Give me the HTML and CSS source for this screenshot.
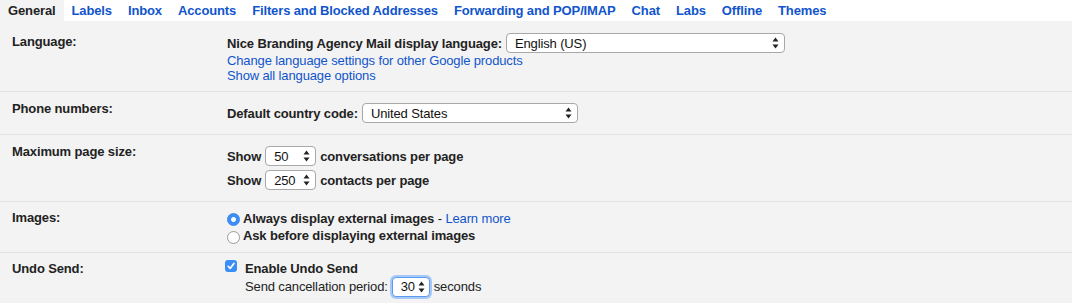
FILE: index.html
```html
<!DOCTYPE html>
<html>
<head>
<meta charset="utf-8">
<link rel="stylesheet" href="styles.css">
</head>
<body>
<div class="tabs">
  <span class="tab active">General</span>
  <a class="tab">Labels</a>
  <a class="tab">Inbox</a>
  <a class="tab">Accounts</a>
  <a class="tab">Filters and Blocked Addresses</a>
  <a class="tab">Forwarding and POP/IMAP</a>
  <a class="tab">Chat</a>
  <a class="tab">Labs</a>
  <a class="tab">Offline</a>
  <a class="tab">Themes</a>
</div>
<div class="settings">
  <div class="row row-lang">
    <div class="label">Language:</div>
    <div class="value">
      <div class="line ctl"><b>Nice Branding Agency Mail display language:</b><span class="select w-lang">English (US)<svg class="arrows" width="7" height="12" viewBox="0 0 7 12"><path d="M3.5 0.5 6.5 4.5H0.5Z M3.5 11.5 6.5 7.5H0.5Z"/></svg></span></div>
      <div class="line"><a class="link">Change language settings for other Google products</a></div>
      <div class="line"><a class="link">Show all language options</a></div>
    </div>
  </div>
  <div class="row row-phone">
    <div class="label">Phone numbers:</div>
    <div class="value">
      <div class="line ctl"><b>Default country code:</b><span class="select w-country">United States<svg class="arrows" width="7" height="12" viewBox="0 0 7 12"><path d="M3.5 0.5 6.5 4.5H0.5Z M3.5 11.5 6.5 7.5H0.5Z"/></svg></span></div>
    </div>
  </div>
  <div class="row row-size">
    <div class="label">Maximum page size:</div>
    <div class="value">
      <div class="line ctl"><b>Show</b><span class="select w-num">50<svg class="arrows" width="7" height="12" viewBox="0 0 7 12"><path d="M3.5 0.5 6.5 4.5H0.5Z M3.5 11.5 6.5 7.5H0.5Z"/></svg></span><b>conversations per page</b></div>
      <div class="line ctl"><b>Show</b><span class="select w-num">250<svg class="arrows" width="7" height="12" viewBox="0 0 7 12"><path d="M3.5 0.5 6.5 4.5H0.5Z M3.5 11.5 6.5 7.5H0.5Z"/></svg></span><b>contacts per page</b></div>
    </div>
  </div>
  <div class="row row-img">
    <div class="label">Images:</div>
    <div class="value">
      <div class="line opt"><span class="radio on"></span><b>Always display external images</b>&nbsp;-&nbsp;<a class="link">Learn more</a></div>
      <div class="line opt"><span class="radio off"></span><b>Ask before displaying external images</b></div>
    </div>
  </div>
  <div class="row row-undo">
    <div class="label">Undo Send:</div>
    <div class="value">
      <div class="line chk"><span class="checkbox"><svg width="12" height="12" viewBox="0 0 12 12"><path d="M3.2 6.3 5.1 8.4 8.9 3.4" fill="none" stroke="#fff" stroke-width="1.7" stroke-linecap="round" stroke-linejoin="round"/></svg></span><b>Enable Undo Send</b></div>
      <div class="line ctl indent">Send cancellation period:<span class="select w-undo focus">30<svg class="arrows" width="7" height="12" viewBox="0 0 7 12"><path d="M3.5 0.5 6.5 4.5H0.5Z M3.5 11.5 6.5 7.5H0.5Z"/></svg></span>seconds</div>
    </div>
  </div>
</div>
</body>
</html>
```
FILE: styles.css
```css
html, body {
  margin: 0;
  padding: 0;
}
body {
  font-family: "Liberation Sans", Arial, sans-serif;
  font-size: 13px;
  letter-spacing: -0.13px;
  color: #222;
  background: #f3f3f3;
  height: 303px;
  overflow: hidden;
}
.tabs {
  display: flex;
  background: #fff;
  height: 21px;
  line-height: 21px;
  font-weight: bold;
}
.tab {
  padding: 0 8px;
  color: #15c;
  white-space: nowrap;
}
.tab.active {
  background: #f3f3f3;
  color: #222;
}
.row {
  display: grid;
  grid-template-columns: 215px 1fr;
  padding-left: 12px;
  border-bottom: 1px solid #e1e1e1;
}
.label {
  font-weight: bold;
  line-height: 15px;
}
.value {
  display: flex;
  flex-direction: column;
}
.line {
  display: flex;
  align-items: center;
  line-height: 15px;
  height: 15px;
  white-space: nowrap;
}
.line.ctl {
  height: 20px;
  gap: 4px;
}
.link {
  color: #15c;
  cursor: pointer;
}
b {
  font-weight: bold;
}
.select {
  display: inline-flex;
  align-items: center;
  justify-content: space-between;
  box-sizing: border-box;
  height: 20px;
  border: 1px solid #a8a8a8;
  border-radius: 4px;
  background: #fff;
  padding: 0 5px 0 8px;
  font-weight: normal;
  color: #111;
}
.arrows {
  fill: #222;
  flex: none;
}
.w-lang { width: 279px; }
.w-country { width: 216px; }
.w-num { width: 51px; }
.w-undo { width: 38px; padding-right: 4px; }
.select.focus {
  border-color: #5d9bf0;
  box-shadow: 0 0 0 2px #a6c9f8;
}

/* row 1 */
.row-lang .label { padding-top: 13px; }
.row-lang .value { padding: 12px 0 8px; }

/* row 2 */
.row-phone .label { padding-top: 9px; }
.row-phone .value { padding: 11px 0 11px; }

/* row 3 */
.row-size .label { padding-top: 9px; }
.row-size .value { padding: 11px 0 11px; gap: 4px; }

/* row 4 */
.row-img .label { padding-top: 8px; }
.row-img .value { padding: 8px 0 8px; }
.line.opt { height: 17px; line-height: 17px; }
.radio {
  flex: none;
  width: 13px;
  height: 13px;
  border-radius: 50%;
  box-sizing: border-box;
  margin-right: 3px;
}
.radio.on {
  background: radial-gradient(circle, #fff 0 2.1px, #3d8ff6 2.7px);
  border: 1px solid #3585ee;
  margin-top: 1px;
}
.radio.off {
  background: #fff;
  border: 1px solid #9a9a9a;
  margin-top: 4px;
}

/* row 5 */
.row-undo .label { padding-top: 8px; }
.row-undo .value { padding: 8px 0 8px; }
.line.chk { height: 15px; }
.checkbox {
  flex: none;
  width: 12px;
  height: 12px;
  border-radius: 3px;
  background: #3b8ef5;
  margin-left: -2px;
  margin-right: 8px;
  margin-top: -5px;
  display: flex;
}
.line.indent {
  padding-left: 18px;
  height: 21px;
}
```
